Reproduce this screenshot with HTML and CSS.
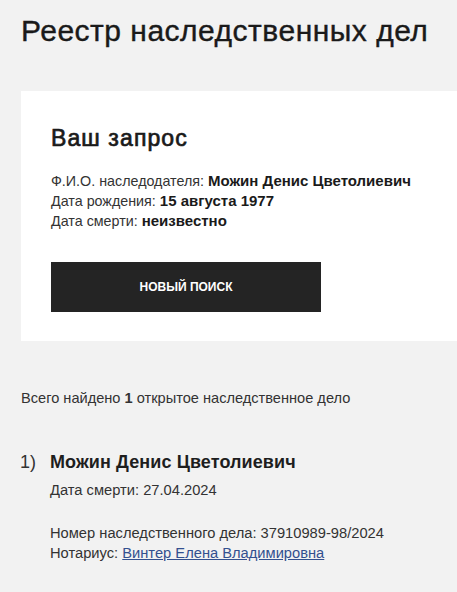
FILE: index.html
```html
<!DOCTYPE html>
<html lang="ru">
<head>
    <meta charset="UTF-8">
    <meta name="viewport" content="width=device-width, initial-scale=1.0">
    <title>Реестр наследственных дел</title>

    <link rel="stylesheet" href="styles.css">
</head>
<body>
    <div class="page">
        <h1 class="page-title">Реестр наследственных дел</h1>

        <div class="request-card">
            <h2 class="request-title">Ваш запрос</h2>

            <div class="request-info">
                <div>Ф.И.О. наследодателя: <b>Можин Денис Цветолиевич</b></div>
                <div>Дата рождения: <b>15 августа 1977</b></div>
                <div>Дата смерти: <b>неизвестно</b></div>
            </div>

            <button class="search-button">Новый поиск</button>
        </div>

        <p class="summary">Всего найдено <b>1</b> открытое наследственное дело</p>

        <ol class="results">
            <li class="result">
                <span class="result-num">1)</span>
                <div class="result-body">
                    <div class="result-name">Можин Денис Цветолиевич</div>
                    <div class="result-line">Дата смерти: 27.04.2024</div>

                    <div class="result-details">
                        <div class="result-line">Номер наследственного дела: 37910989-98/2024</div>
                        <div class="result-line">Нотариус: <a href="#">Винтер Елена Владимировна</a></div>
                    </div>
                </div>
            </li>
        </ol>
    </div>
</body>
</html>
```

FILE: styles.css
```css
* {
    box-sizing: border-box;
}

body {
    margin: 0;
    background-color: #f2f2f2;
    color: #1e1e1e;
    font-family: 'Liberation Sans', Arial, sans-serif;
    font-size: 15px;
    line-height: 20px;
    overflow: hidden;
}

.page {
    padding-left: 21px;
}

.page-title {
    margin: 13px 0 0;
    font-size: 30px;
    line-height: 36px;
    font-weight: normal;
    letter-spacing: .5px;
    -webkit-text-stroke: .4px #1a1a1a;
    color: #1a1a1a;
}

.request-card {
    margin-top: 42px;
    background-color: #fff;
    padding: 33px 30px 29px;
}

.request-title {
    margin: 0 0 19px;
    font-size: 23px;
    line-height: 28px;
    font-weight: normal;
    letter-spacing: 1.1px;
    -webkit-text-stroke: .7px #1a1a1a;
    color: #1a1a1a;
}

.request-info {
    font-size: 14.3px;
    color: #333;
}

.request-info b {
    font-size: 15px;
    color: #1a1a1a;
}

.search-button {
    display: block;
    margin-top: 31px;
    width: 270px;
    height: 50px;
    border: none;
    border-radius: 0;
    background-color: #242424;
    color: #fff;
    font-family: inherit;
    font-size: 12px;
    font-weight: bold;
    text-transform: uppercase;
    cursor: pointer;
}

.summary {
    margin: 47px 0 0;
    font-size: 14.6px;
    color: #333;
}

.results {
    list-style: none;
    margin: 42px 0 0;
    padding: 0;
}

.result {
    display: flex;
}

.result-num {
    width: 30px;
    flex-shrink: 0;
    margin-left: -1px;
    font-size: 18px;
    line-height: 24px;
    color: #333;
}

.result-name {
    font-size: 18px;
    line-height: 24px;
    font-weight: bold;
    letter-spacing: .1px;
}

.result-line {
    font-size: 14.7px;
    color: #333;
}

.result-body > .result-line {
    margin-top: 6px;
}

.result-details {
    margin-top: 23px;
}

.result-details a {
    color: #33508f;
}
```
